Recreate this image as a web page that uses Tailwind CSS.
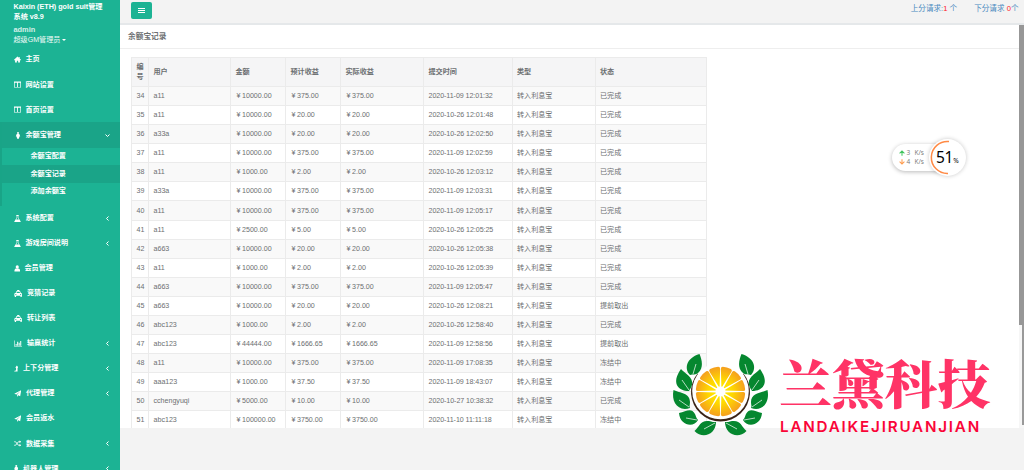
<!DOCTYPE html>
<html>
<head>
<meta charset="utf-8">
<title>余额宝记录</title>
<script src="https://cdn.jsdelivr.net/npm/@tailwindcss/browser@4"></script>
</head>
<body class="w-[1024px] h-[470px] overflow-hidden bg-[#f3f3f3] font-['Liberation_Sans','Noto_Sans_CJK_SC',sans-serif] text-[7.1px] text-[#6c6f71]">
<svg class="hidden">
  <symbol id="home" viewBox="0 0 16 16"><path d="M8 1 0 8.500l1 1.500 1.500-1V15h4v-4h3v4h4V9l1.500 1 1-1.500-3-3V2h-2v1.800z"/></symbol>
  <symbol id="cols" viewBox="0 0 16 16"><path fill-rule="evenodd" d="M0 1h16v14H0zM1.500 4v9.500h5.500V4zM9 4v9.500h5.500V4z"/></symbol>
  <symbol id="person" viewBox="0 0 10 16"><circle cx="5" cy="2.300" r="2.300"/><path d="M2 4.500h6L10 10H8v2l-2 4H4l-2-4v-2H0z"/></symbol>
  <symbol id="flask" viewBox="0 0 16 16"><path fill-rule="evenodd" d="M5 0h6v1.500h-1V6l5 8c.8 1.200 0 2-1 2H2c-1 0-1.800-.8-1-2l5-8V1.500H5zM7.300 6.500 5 10h6L8.700 6.500V2H7.300z"/></symbol>
  <symbol id="user" viewBox="0 0 16 16"><ellipse cx="8" cy="4.500" rx="3.900" ry="4.500"/><path d="M1 15.500c0-4 1-7.500 4-7.500 2 1.600 4 1.600 6 0 3 0 4 3.500 4 7.500z"/></symbol>
  <symbol id="cab" viewBox="0 0 18 16"><path fill-rule="evenodd" d="M6.500 0h5v2H13l2 5c2 0 3 1 3 3v3h-1v3h-3v-3H4v3H1v-3H0v-3c0-2 1-3 3-3l2-5h1.500zM6 4 5 7h8l-1-3zM3.500 9a1.300 1.300 0 1 0 .01 0zM14.500 9a1.300 1.300 0 1 0 .01 0z"/></symbol>
  <symbol id="chart" viewBox="0 0 18 16"><path d="M0 1h1.300v13H18v1.300H0zM3 9h2.300v4H3zM6.500 4h2.300v9H6.500zM10 6.500h2.300V13H10zM13.500 2.500h2.300V13h-2.300z"/></symbol>
  <symbol id="level" viewBox="0 0 10 16"><path d="m6.500 1 3.500 5H8v9H0l2-2.500h2.500V6h-2z"/></symbol>
  <symbol id="plane" viewBox="0 0 16 16"><path d="M16 0 13.500 14 9 12l-2.500 4v-5L14 2.500 5 10.500 0 8.500z"/></symbol>
  <symbol id="shuffle" viewBox="0 0 16 16"><path fill="none" stroke="currentColor" stroke-width="2" d="M0 4h3l6.500 8H13M0 12h3l6.500-8H13"/><path d="m12 1 4 3-4 3zM12 9l4 3-4 3z"/></symbol>
</svg>
<div class="flex h-[470px]">
  <nav class="w-[120px] shrink-0 h-full overflow-hidden bg-[#1cb394] text-white font-bold">
    <div class="h-[47px] pl-[13.500px] pt-[2px]">
      <div class="text-[7.200px] leading-[10px] whitespace-nowrap">Kaixin (ETH) gold suit管理<br>系统 v8.9</div>
      <div class="mt-[3px] leading-[10px] text-[7.400px] text-[#d5f0e9]">admin</div>
      <div class="leading-[10px] font-normal text-[#eefaf7] flex items-center">超级GM管理员<span class="ml-[1.500px] border-x-[2px] border-x-transparent border-t-[2px] border-t-white"></span></div>
    </div>
    <div id="menu"></div>
  </nav>
  <main class="grow min-w-0 flex flex-col">
    <header class="h-[24.500px] shrink-0 border-b-[2px] border-[#e5e8ea] flex justify-between pl-[11px] pr-[5.500px] text-[#4a8abf]">
      <div class="mt-[2px] w-[21px] h-[16.500px] rounded-[2px] bg-[#1cb394] flex items-center justify-center">
        <div class="flex flex-col gap-[1px]"><i class="block w-[7px] h-[1px] bg-white"></i><i class="block w-[7px] h-[1px] bg-white"></i><i class="block w-[7px] h-[1px] bg-white"></i></div>
      </div>
      <div class="flex gap-[17px] pt-[3px] leading-[11px] text-[7.600px]"><span>上分请求:<b class="font-normal text-[#f22]">1</b> 个</span><span>下分请求 <b class="font-normal text-[#f22]">0</b>个</span></div>
    </header>
    <div class="flex h-[403px] shrink-0">
      <section class="w-[899px] h-full bg-white overflow-hidden">
        <h1 class="h-[24.500px] border-b border-[#eee] pl-[8px] leading-[23px] font-bold text-[7.700px]">余额宝记录</h1>
        <table class="ml-[11px] mt-[8px] w-[576px] table-fixed border-collapse border border-[#ebebeb]">
          <colgroup><col class="w-[17px]"><col class="w-[82px]"><col class="w-[55px]"><col class="w-[55px]"><col class="w-[83px]"><col class="w-[88.500px]"><col class="w-[83px]"><col></colgroup>
          <thead><tr class="h-[29px] bg-[#f5f5f6] text-left font-bold">
            <th class="border border-[#ebebeb] p-0 pl-[4.500px] pr-[4px] leading-[10px]">编号</th>
            <th class="border border-[#ebebeb] pl-[4.500px]">用户</th><th class="border border-[#ebebeb] pl-[4.500px]">金额</th><th class="border border-[#ebebeb] pl-[4.500px]">预计收益</th><th class="border border-[#ebebeb] pl-[4.500px]">实际收益</th><th class="border border-[#ebebeb] pl-[4.500px]">提交时间</th><th class="border border-[#ebebeb] pl-[4.500px]">类型</th><th class="border border-[#ebebeb] pl-[4.500px]">状态</th>
          </tr></thead>
          <tbody id="rows"></tbody>
        </table>
      </section>
      <div class="w-[5px] h-full bg-[#f6f6f6] flex flex-col items-end"><div class="w-[5px] h-[300px] bg-[#979797]"></div><div class="w-[2px] h-[100px] bg-[#999]"></div></div>
    </div>
  </main>
</div>

<!-- network speed widget -->
<div class="absolute left-[892px] top-[144px] w-[60px] h-[27px] rounded-full bg-white shadow-[0_1px_4px_rgba(0,0,0,.28)] pl-[7px] pt-[4px] text-[6.500px] leading-[10px] font-['Open_Sans',sans-serif] text-[#777]">
  <div class="flex items-center h-[9.500px]"><svg class="w-[6px] h-[6px] mr-[1.500px]" viewBox="0 0 10 10" fill="none" stroke="#3fc45c" stroke-width="1.700"><path d="M5 9.500V1.500M1 5.500l4-4 4 4"/></svg><span class="w-[8px]">3</span><span>K/s</span></div>
  <div class="flex items-center h-[9.500px]"><svg class="w-[6px] h-[6px] mr-[1.500px]" viewBox="0 0 10 10" fill="none" stroke="#ff9a4a" stroke-width="1.700"><path d="M5 .5v8M1 4.500l4 4 4-4"/></svg><span class="w-[8px]">4</span><span>K/s</span></div>
</div>
<div class="absolute left-[929px] top-[139px] w-[37px] h-[37px] rounded-full bg-white shadow-[0_0_4px_rgba(0,0,0,.22)]">
  <svg class="absolute inset-0 w-[37px] h-[37px]" viewBox="0 0 37 37"><path d="M20 2.500A16 16 0 1 0 19 34.400" fill="none" stroke="#ff8a45" stroke-width="1.500"/></svg>
  <div class="absolute left-[7px] top-[9px] text-[15.500px] leading-[19px] text-black font-['Noto_Sans',sans-serif] whitespace-nowrap tracking-[-0.300px]">51<span class="text-[6.600px] tracking-normal">%</span></div>
</div>

<!-- company mark -->
<svg class="absolute left-[660px] top-[340px] w-[120px] h-[110px]" viewBox="0 0 120 110">
  <defs><radialGradient id="juice" gradientUnits="userSpaceOnUse" cx="60.500" cy="52" r="25"><stop offset="0" stop-color="#fff200"/><stop offset=".5" stop-color="#ffd800"/><stop offset="1" stop-color="#f5a01e"/></radialGradient></defs>
  <path fill="#3b2317" d="M37.500 33.500A29.500 29.500 0 1 0 83.500 33.500L60.500 51z"/>
  <circle cx="60.500" cy="51" r="28.300" fill="#fff"/>
  <g id="slices" fill="url(#juice)"></g>
  <circle cx="60.500" cy="51.500" r="5" fill="#fff"/>
  <g id="wreath"></g>
</svg>
<div class="absolute left-[779px] top-[353px] text-[52.800px] leading-[56px] font-black text-[#ff3366] whitespace-nowrap font-['Noto_Serif_CJK_SC','Noto_Sans_CJK_SC',serif]">兰黛科技</div>
<div class="absolute left-[780px] top-[417px] text-[15.200px] leading-[20px] font-semibold tracking-[1.800px] text-[#fa0538] whitespace-nowrap font-[Inter,sans-serif]">LANDAIKEJIRUANJIAN</div>

<script>
const icon = (n, w) => `<svg class="h-[7px] shrink-0" style="width:${w}px" fill="currentColor"><use href="#${n}"/></svg>`;
const chev = open => open
  ? '<svg class="w-[5px] h-[5px] ml-auto" viewBox="0 0 10 10" fill="none" stroke="#fff" stroke-width="2"><path d="m1 3 4 4 4-4"/></svg>'
  : '<svg class="w-[5px] h-[5px] ml-auto" viewBox="0 0 10 10" fill="none" stroke="#fff" stroke-width="2"><path d="M7 1 3 5l4 4"/></svg>';
const items = [
 ['home','主页',7,12,0],['cols','网站设置',7,12,0],['cols','首页设置',7,12,0],['person','余额宝管理',8,12,2],
 ['flask','系统配置',7,12,1],['flask','游戏房间说明',7,12,1],['user','会员管理',6.5,11,0],['cab','竞猜记录',8.5,13.5,0],
 ['cab','转让列表',8.5,13.5,0],['chart','输赢统计',8.5,13.5,1],['level','上下分管理',4.5,9.5,1],['plane','代理管理',7.500,12.5,1],
 ['plane','会员返水',7.500,12.5,0],['shuffle','数据采集',7.500,12.5,1],['person','机器人管理',4.500,9.5,1]];
let h = '';
for (const [ic, t, w, off, arrow] of items) {
  const inner = `<span class="flex items-center" style="width:${off}px">${icon(ic, w)}</span><span>${t}</span>${arrow ? chev(arrow === 2) : ''}`;
  if (arrow === 2) {
    h += `<div class="border-l-2 border-[#19a487] h-[83.500px]"><div class="flex items-center h-[26px] pl-[11.500px] pr-[10px] bg-[#1aa488]">${inner}</div>
      <div class="h-[17px] leading-[17px] pl-[28.500px]">余额宝配置</div><div class="h-[18px] leading-[18px] pl-[28.500px] bg-[#1aa488]">余额宝记录</div><div class="h-[17px] leading-[17px] pl-[28.500px]">添加余额宝</div></div>`;
  } else h += `<div class="flex items-center h-[25.060px] pt-[0.500px] pl-[13.500px] pr-[10px]">${inner}</div>`;
}
document.getElementById('menu').innerHTML = h;

const data = `34|a11|10000.00|375.00|2020-11-09 12:01:32|已完成
35|a11|10000.00|20.00|2020-10-26 12:01:48|已完成
36|a33a|10000.00|20.00|2020-10-26 12:02:50|已完成
37|a11|10000.00|375.00|2020-11-09 12:02:59|已完成
38|a11|1000.00|2.00|2020-10-26 12:03:12|已完成
39|a33a|10000.00|375.00|2020-11-09 12:03:31|已完成
40|a11|10000.00|375.00|2020-11-09 12:05:17|已完成
41|a11|2500.00|5.00|2020-10-26 12:05:25|已完成
42|a663|10000.00|20.00|2020-10-26 12:05:38|已完成
43|a11|1000.00|2.00|2020-10-26 12:05:39|已完成
44|a663|10000.00|375.00|2020-11-09 12:05:47|已完成
45|a663|10000.00|20.00|2020-10-26 12:08:21|提前取出
46|abc123|1000.00|2.00|2020-10-26 12:58:40|已完成
47|abc123|44444.00|1666.65|2020-11-09 12:58:56|提前取出
48|a11|10000.00|375.00|2020-11-09 17:08:35|冻结中
49|aaa123|1000.00|37.50|2020-11-09 18:43:07|冻结中
50|cchengyuqi|5000.00|10.00|2020-10-27 10:38:32|已完成
51|abc123|100000.00|3750.00|2020-11-10 11:11:18|冻结中`;
document.getElementById('rows').innerHTML = data.split('\n').map(l => {
  const [id, u, a, b, t, s] = l.split('|');
  const yen = v => `<span class="pl-[1px] [word-spacing:-0.4px]">¥ ${v}</span>`;
  const time = `<span class="tracking-[-0.060px]">${t}</span>`;
  return '<tr class="h-[19.080px] odd:bg-[#f9f9f9]">' + [id, u, yen(a), yen(b), yen(b), time, '转入利息宝', s]
    .map(c => `<td class="border border-[#ebebeb] p-0 pl-[4.500px] leading-[10px] whitespace-nowrap">${c}</td>`).join('') + '</tr>';
}).join('');

let s = '';
for (let i = 0; i < 12; i++)
  s += `<path transform="rotate(${i * 30 + 15} 60.500 51.500)" d="M60.500 48 55 29.500q-.6-1.900 1.300-2.400 4.200-.9 8.400 0 1.900.5 1.300 2.400z"/>`;
document.getElementById('slices').innerHTML = s;
const leaves = [
  ['M39.500 14C42 20 44 28 38 33 36 35 33 34 30 35 24 29 26 18 39.500 14z', 'M36 24 33 34'],
  ['M21 29C24 33 34 37 32 45 31 48 30 49 29 51 18 51 11 43 21 29z', 'M22 40 29 50'],
  ['M13.500 50C20 53 30 53 30 62 30 65 29 66 30 68 18 72 11 62 13.500 50z', 'M19 60 29 67'],
  ['M19 73C26 72 31 67 35 74 36 76 36 78 38 80 34 88 20 86 19 73z', 'M26 78 37 80'],
  ['M34.500 91C40 86 40 80 49 81 52 82 54 82 56 82 56 94 43 100 34.500 91z', 'M44 89 55 83']];
document.getElementById('wreath').innerHTML = [0, 1].map(m => `<g transform="${m ? 'translate(121 0) scale(-1 1)' : ''}">` +
  leaves.map(([body, vein]) => `<path fill="#05872f" d="${body}"/><path stroke="#fff" stroke-width=".7" d="${vein}"/>`).join('') + '</g>').join('');
</script>
</body>
</html>
